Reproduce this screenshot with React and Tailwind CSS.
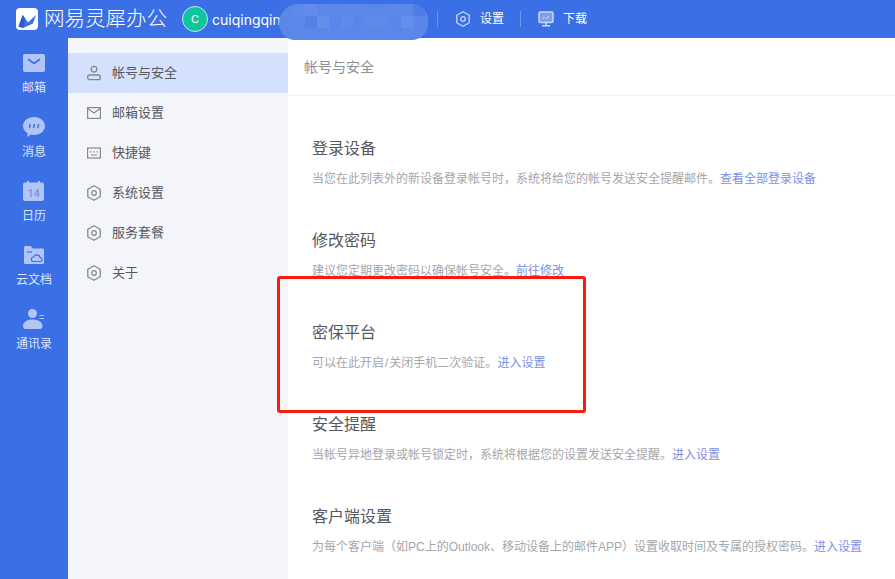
import { useState } from "react";

const cjk = "font-['Inter','Noto_Sans_CJK_SC',sans-serif]";
const body = "font-['Liberation_Sans','Noto_Sans_CJK_SC',sans-serif]";

function HexIcon({ className = "" }) {
  return (
    <svg viewBox="0 0 16 16" className={className} fill="none" stroke="currentColor" strokeWidth="1.3">
      <path d="M8 .8l6.200 3.500v7.400L8 15.200l-6.200-3.500V4.300z" strokeLinejoin="round" />
      <circle cx="8" cy="8" r="2.300" />
    </svg>
  );
}

function UserIcon({ className = "" }) {
  return (
    <svg viewBox="0 0 16 16" className={className} fill="none" stroke="currentColor" strokeWidth="1.3">
      <circle cx="8" cy="4.200" r="2.800" />
      <rect x="1.600" y="10" width="12.800" height="4.600" rx="2.200" />
    </svg>
  );
}

function MailIcon({ className = "" }) {
  return (
    <svg viewBox="0 0 16 16" className={className} fill="none" stroke="currentColor" strokeWidth="1.2">
      <rect x="1.600" y="2.600" width="12.800" height="10.800" />
      <path d="M1.600 3.200L8 8l6.400-4.800" />
    </svg>
  );
}

function KeyboardIcon({ className = "" }) {
  return (
    <svg viewBox="0 0 16 16" className={className} fill="none" stroke="currentColor" strokeWidth="1.2">
      <rect x="1.600" y="3" width="12.800" height="10" />
      <path d="M4 6.800h1.400M7.300 6.800h1.400M10.600 6.800H12M5 10h6" />
    </svg>
  );
}

function RailMail() {
  return (
    <svg viewBox="0 0 22 18" className="w-[22px] h-[18px]">
      <rect width="22" height="18" rx="2" fill="#b1c6f7" />
      <path d="M5.500 5.500L11 9.500l5.500-4" fill="none" stroke="#3a6fe6" strokeWidth="1.600" strokeLinecap="round" />
    </svg>
  );
}

function RailChat() {
  return (
    <svg viewBox="0 0 22 20" className="w-[22px] h-[20px]">
      <path d="M11 0c6 0 11 3.900 11 9s-5 9-11 9c-1 0-2-.1-3-.4L4.200 20l.2-4C1.700 14.400 0 11.900 0 9c0-5.100 5-9 11-9z" fill="#b1c6f7" />
      <path d="M7 7.500L6.500 10.500M11.200 7.500L10.700 10.500M15.400 7.500L14.900 10.500" stroke="#3a6fe6" strokeWidth="1.500" strokeLinecap="round" />
    </svg>
  );
}

function RailCalendar() {
  return (
    <svg viewBox="0 0 21 20" className="w-[21px] h-[20px]">
      <rect y="1.500" width="21" height="18.500" rx="2" fill="#b1c6f7" />
      <rect x="4" width="2" height="3" fill="#b1c6f7" />
      <rect x="15" width="2" height="3" fill="#b1c6f7" />
      <text x="10.500" y="15.500" textAnchor="middle" fontSize="11" fontWeight="700" fill="#7f9ae8" fontFamily="Roboto, sans-serif">14</text>
    </svg>
  );
}

function RailFolder() {
  return (
    <svg viewBox="0 0 20 18" className="w-[20px] h-[18px]">
      <path d="M0 1.500C0 .7.7 0 1.500 0h5.300l2 2.500h9.700c.8 0 1.500.7 1.500 1.500v12.500c0 .8-.7 1.500-1.500 1.500h-17C.7 18 0 17.300 0 16.500z" fill="#b1c6f7" />
      <path d="M3 6h5" stroke="#3a6fe6" strokeWidth="1.200" />
      <path d="M9 15.500a2.300 2.300 0 0 1 .4-4.500 3.600 3.600 0 0 1 6.800.6 2 2 0 0 1 .4 3.900z" fill="#b1c6f7" stroke="#3a6fe6" strokeWidth="1.200" />
    </svg>
  );
}

function RailContact() {
  return (
    <svg viewBox="0 0 21 20" className="w-[21px] h-[20px]">
      <circle cx="9.500" cy="4.500" r="4.500" fill="#b1c6f7" />
      <path d="M0 17c0-4 4-6.500 9.500-6.500S19.500 13 19.500 17c0 1.800-1 3-2.500 3H2.500C1 20 0 18.800 0 17z" fill="#b1c6f7" />
      <path d="M16.500 6.500H21M16.500 9.500H21" stroke="#b1c6f7" strokeWidth="1.200" />
    </svg>
  );
}

function Logo() {
  return (
    <svg viewBox="0 0 22 22" className="w-[22px] h-[22px] shrink-0">
      <rect width="22" height="22" rx="4" fill="#fff" />
      <path d="M6.700 7L12 14.500 20 7l-3 8.500L7 20l-4.500-1.500z" fill="#3a6fe6" />
      <path d="M6.700 7L9 10.200 7 20l-4.500-1.500z" fill="#2a5bd0" />
    </svg>
  );
}

const rail = [
  { label: "邮箱", Icon: RailMail },
  { label: "消息", Icon: RailChat },
  { label: "日历", Icon: RailCalendar },
  { label: "云文档", Icon: RailFolder },
  { label: "通讯录", Icon: RailContact },
];

const menu = [
  { label: "帐号与安全", Icon: UserIcon },
  { label: "邮箱设置", Icon: MailIcon },
  { label: "快捷键", Icon: KeyboardIcon },
  { label: "系统设置", Icon: HexIcon },
  { label: "服务套餐", Icon: HexIcon },
  { label: "关于", Icon: HexIcon },
];

const sections = [
  { title: "登录设备", desc: "当您在此列表外的新设备登录帐号时，系统将给您的帐号发送安全提醒邮件。", link: "查看全部登录设备" },
  { title: "修改密码", desc: "建议您定期更改密码以确保帐号安全。", link: "前往修改" },
  {
    title: "密保平台",
    desc: <>可以在此开启<span className="mx-px">/</span>关闭手机二次验证。</>,
    link: "进入设置",
  },
  { title: "安全提醒", desc: "当帐号异地登录或帐号锁定时，系统将根据您的设置发送安全提醒。", link: "进入设置" },
  { title: "客户端设置", desc: "为每个客户端（如PC上的Outlook、移动设备上的邮件APP）设置收取时间及专属的授权密码。", link: "进入设置" },
];

// 打码 tiles
const tiles = [
  "bg-[#5d88ea]", "bg-[#5f8aeb]", "bg-[#618ceb]", "bg-[#5d88ea]", "bg-[#5b86ea]", "bg-[#5d88ea]", "bg-[#5d88ea]", "bg-[#5b86ea]", "bg-[#5b86ea]", "bg-[#5d88ea]", "bg-[#5b86ea]", "bg-[#4f7de8]",
  "bg-[#5b86ea]", "bg-[#5d88ea]", "bg-[#5580e9]", "bg-[#648dec]", "bg-[#5a85ea]", "bg-[#5f89eb]", "bg-[#5a85ea]", "bg-[#5e89eb]", "bg-[#5e89eb]", "bg-[#5a85ea]", "bg-[#648dec]", "bg-[#5a85ea]",
];

export default function App() {
  const [active, setActive] = useState(0);

  return (
    <div className={`relative flex flex-col h-[579px] w-[895px] overflow-hidden bg-[#3a6fe6] ${cjk}`}>
      {/* 顶部栏 */}
      <header className="flex items-center h-[38px] shrink-0 pl-4 text-white">
        <Logo />
        <span className="ml-[6px] text-[20.5px] font-light leading-none whitespace-nowrap">网易灵犀办公</span>
        <div className="ml-[15px] flex items-center justify-center w-[26px] h-[26px] rounded-full bg-[#0fc59b] border border-[#cfe0ff] text-[11px]">C</div>
        <span className="ml-[4px] w-[225px] text-[14px] whitespace-nowrap">cuiqingqin</span>
        <div className="w-px h-4 bg-[#6f96ef]" />
        <HexIcon className="ml-[17px] w-4 h-4 text-[#c9d9fb]" />
        <span className="ml-[9px] text-[12px]">设置</span>
        <div className="ml-4 w-px h-4 bg-[#6f96ef]" />
        <svg viewBox="0 0 16 16" className="ml-[17px] w-4 h-4 text-[#c9d9fb]" fill="none" stroke="currentColor" strokeWidth="1.500">
          <rect x="1" y="1" width="14" height="10.500" rx="1.500" fill="#7f9ef0" />
          <path d="M5 7.500l1.500-1.500M8.500 7.500l2-2" strokeWidth="1" stroke="#fff" />
          <path d="M8 11.500V14M4 14.800h8" />
        </svg>
        <span className="ml-[9px] text-[12px]">下载</span>
      </header>

      <div className="flex flex-1 min-h-0">
        {/* 左侧导航 */}
        <nav className="w-[68px] shrink-0 flex flex-col items-center pt-[15px]">
          {rail.map(({ label, Icon }) => (
            <div key={label} className="h-[64px] flex flex-col items-center gap-[7px] text-[12px] leading-[16px] text-[#dbe6fd]">
              <div className="h-[20px] flex items-center"><Icon /></div>
              <span>{label}</span>
            </div>
          ))}
        </nav>

        {/* 设置菜单 */}
        <aside className="w-[220px] shrink-0 bg-[#f3f5fa] pt-[15px]">
          {menu.map(({ label, Icon }, i) => (
            <button
              key={label}
              onClick={() => setActive(i)}
              className={`flex items-center w-full h-10 pl-[18px] text-[13px] text-[#55585f] ${active === i ? "bg-[#d3e1fc]" : ""}`}
            >
              <Icon className="w-4 h-4 text-[#85888e]" />
              <span className="ml-[10px]">{label}</span>
            </button>
          ))}
        </aside>

        {/* 内容 */}
        <main className={`flex-1 bg-white ${body}`}>
          <div className="h-[58px] flex items-center pl-4 pt-[2px] border-b border-[#f0f1f4] text-[14px] text-[#8b8e94]">帐号与安全</div>
          <div className="pl-6 pt-[41px] flex flex-col gap-[46px]">
            {sections.map((s) => (
              <section key={s.title} className="h-[46px]">
                <h2 className="text-[16px] leading-[24px] text-[#55585f]">{s.title}</h2>
                <p className="mt-[10px] text-[12px] leading-[16px] text-[#a4a6ab] whitespace-nowrap">
                  {s.desc}
                  <a className="text-[#7c8fe2]">{s.link}</a>
                </p>
              </section>
            ))}
          </div>
        </main>
      </div>

      {/* 打码 */}
      <div className="absolute left-[279px] top-[4px] w-[149px] h-[36px] rounded-[18px] rounded-tl-[22px] overflow-hidden bg-[#5b86ea]">
        <div className="grid grid-cols-[repeat(12,12px)] auto-rows-[12px] ml-[2px]">
          {tiles.map((t, i) => (
            <div key={i} className={t} />
          ))}
        </div>
      </div>

      {/* 红框 */}
      <div className="absolute left-[277px] top-[276px] w-[309px] h-[137px] border-[3px] border-[#fb1a10] rounded-[3px]" />
    </div>
  );
}
